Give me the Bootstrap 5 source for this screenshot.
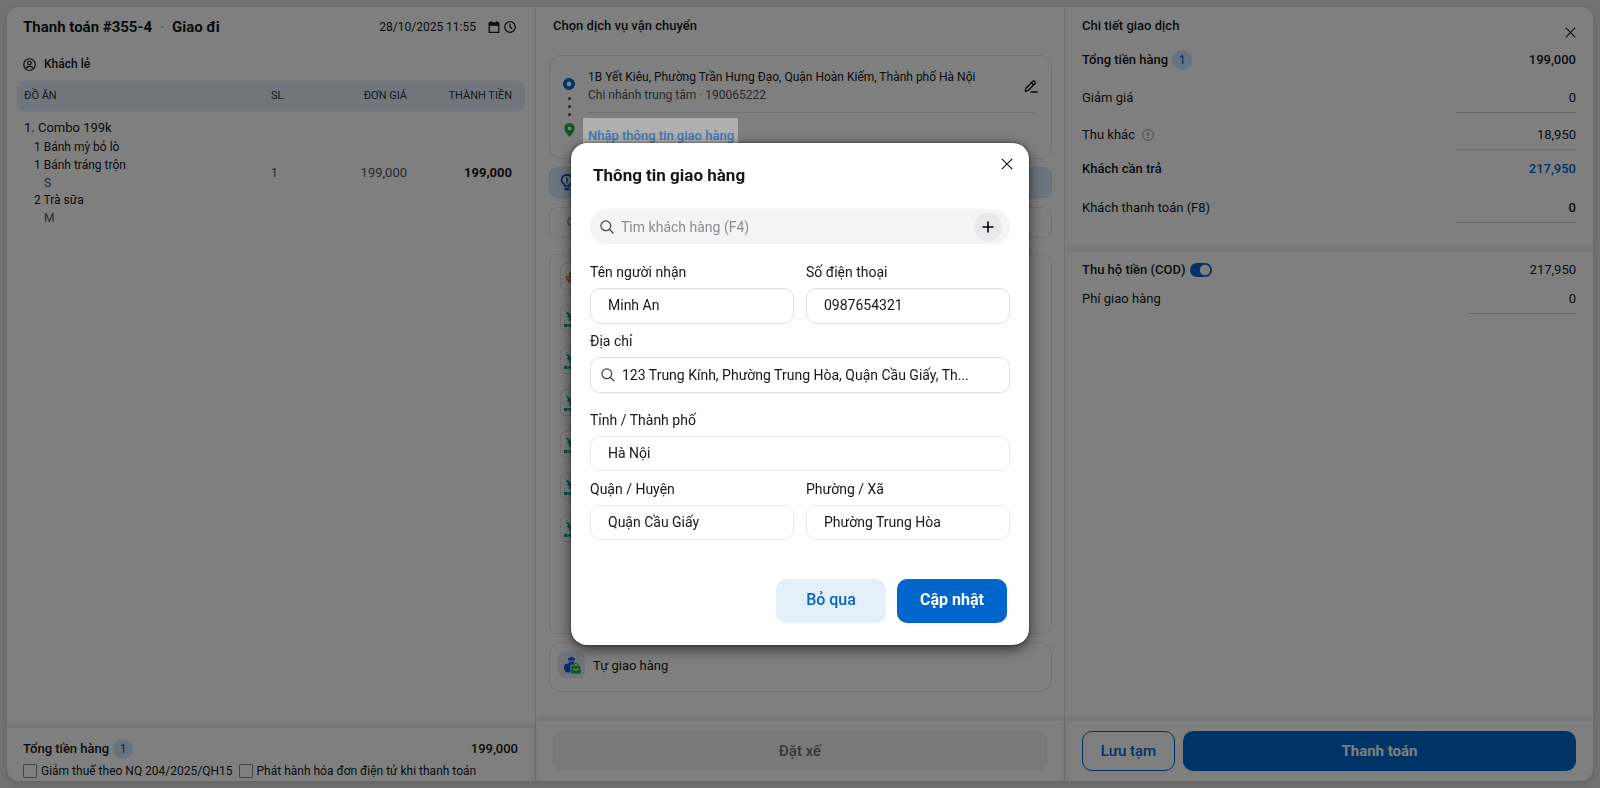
<!DOCTYPE html>
<html lang="vi">
<head>
<meta charset="utf-8">
<meta name="viewport" content="width=device-width, initial-scale=1">
<title>Thanh toán - Giao đi</title>
<link rel="stylesheet" href="https://cdn.jsdelivr.net/npm/bootstrap@5.3.0/dist/css/bootstrap.min.css">
<style>
  :root { --pos-blue: #0066cc; --line: #e2e3e5; --soft: #e0edf9; --ink: #15171a; }
  body { font-family: Roboto, "Noto Sans", sans-serif; font-size: 13px; line-height: 18px; color: var(--ink); background: #e4e4e4; }
  .page { min-height: 100vh; padding: 7px; }
  .panel { background: #fff; border-radius: 12px; overflow: hidden; box-shadow: 0 2px 6px rgba(0,0,0,.14); }
  .pane { flex: 1 1 0; min-width: 0; display: flex; flex-direction: column; }
  .pane + .pane { border-left: 1px solid #e0e0e0; }
  .pane-foot { margin-top: auto; border-top: 1px solid #efefef; box-shadow: 0 -2px 4px rgba(0,0,0,.04), 0 0 8px rgba(0,0,0,.12); }
  .edge { padding-left: 17px; padding-right: 17px; }
  .head { padding-top: 10px; }
  .fine { font-size: 12px; }
  .heavy { font-weight: 500; }
  .bolder { font-weight: 700; }
  .muted { color: #505357; }
  .blue { color: var(--pos-blue); }
  h1, h2, h3 { font-size: 13px; line-height: 18px; font-weight: 500; margin: 0; }
  .doc-head { padding: 10px 19px 0 16px; }
  .pane .doc-title { font-size: 15px; line-height: 20px; font-weight: 700; }
  .icon-btn { border: 0; background: none; padding: 0; display: inline-flex; color: inherit; }
  .count { width: 20px; height: 20px; border-radius: 50%; background: #cfe6fc; color: #0057b8; font-weight: 400; display: inline-flex; align-items: center; justify-content: center; }

  /* order table */
  .client { margin: 18px 0 8px; padding: 0 16px; }
  .order-wrap { padding: 0 10px; }
  .order { width: 100%; border-collapse: separate; border-spacing: 0; }
  .order th { background: var(--soft); font-weight: 400; font-size: 11px; height: 30px; padding: 0 13px 0 0; color: #333; }
  .order th:first-child, .order td:first-child { padding-left: 7px; }
  .order th:first-child { border-radius: 6px 0 0 6px; }
  .order th:last-child { border-radius: 0 6px 6px 0; }
  .order td { padding: 8px 13px 0 0; vertical-align: middle; }
  .combo { font-size: 12px; padding-top: 1px; }
  .combo li { padding-left: 10px; }
  .combo .opt { padding-left: 20px; margin-top: 1px; color: #505357; line-height: 16px; }
  .sum { padding: 11px 17px 1px 16px; }
  .tick { width: 14px; height: 14px; margin: 0; border: 1px solid #8a8a8a; flex: none; }
  .tick[type=checkbox] { border-radius: 1px; }
  .ticks { margin-top: 3px; gap: 6px; }

  /* delivery */
  .stack { padding: 0 12px 0 13px; }
  .box { border: 1px solid var(--line); border-radius: 12px; }
  .route { margin-top: 20px; min-height: 104px; padding: 0 13px; gap: 13px; }
  .route-marks { padding-top: 22px; width: 12px; }
  .route-marks i { width: 3px; height: 3px; border-radius: 50%; background: #555; }
  .route-dots { gap: 5px; margin: 7px 0; }
  .stop { padding: 12px 0 8px; border-bottom: 1px solid #e4e5e7; }
  .place-link { position: relative; z-index: 1051; background: #afafaf; color: #3a78b8; font-weight: 500; text-decoration: none; padding: 9px 4px 7px 5px; display: inline-block; margin: 5px 0 0 -5px; }
  .tip { background: #dcebf9; border: 1px solid #c3dff8; border-radius: 8px; height: 31px; padding-left: 10px; margin-top: 8px; }
  .find { height: 31px; border-radius: 8px; margin-top: 9px; padding-left: 17px; }
  .find input, .seek input, .addr input { border: 0; background: none; outline: 0; min-width: 0; padding: 0 0 0 7px; }
  .carriers { border-radius: 8px; height: 380px; margin-top: 16px; padding: 8px 10px; gap: 15px; }
  .carrier { width: 27px; height: 27px; border: 1px solid var(--line); border-radius: 6px; display: flex; align-items: center; justify-content: center; flex: none; }
  .self-ship { height: 50px; margin-top: 8px; padding: 8px; gap: 8px; }
  .self-ship .carrier { background: #dfeaf5; border: 0; }
  .self-ship label, .self-ship .name { padding-top: 6px; }
  .acts { padding-top: 10px; padding-bottom: 10px; gap: 8px; }
  .act { height: 40px; border-radius: 10px; font-size: 15px; font-weight: 500; line-height: 20px; padding: 0; }
  .act-off:disabled { background: #f3f3f3; border: 0; color: #6d6f72; opacity: 1; }
  .act-line { width: 93px; border: 1px solid var(--pos-blue); color: var(--pos-blue); }
  .act-main { background: var(--pos-blue); color: #fff; font-weight: 700; }

  /* transaction */
  .close-pane { padding-top: 10px; }
  .row-line { display: flex; align-items: baseline; justify-content: space-between; }
  .gap-xs { margin-top: 10px; }
  .gap-s { margin-top: 12px; }
  .gap-l { margin-top: 18px; }
  .gap-xl { margin-top: 20px; }
  .money { border: 0; border-bottom: 1px solid #d0d0d0; border-radius: 0; background: none; width: 120px; padding: 0 0 6px; text-align: right; line-height: 18px; height: 25px; color: inherit; outline: 0; }
  .money-s { width: 108px; }
  .band { height: 7px; background: #f0f0f0; margin: 22px 0 9px; }
  .form-check-input.toggle { width: 22px; height: 14px; margin: 0; border: 0; min-height: 0; flex: none; }
  .form-check-input.toggle:checked { background-color: var(--pos-blue); }

  /* dialog */
  .ship-dialog { max-width: 458px; }
  .ship { border: 0; border-radius: 16px; padding: 20px 19px 22px; box-shadow: 0 4px 14px rgba(0,0,0,.6), 0 0 3px rgba(0,0,0,.5); font-size: 14px; line-height: 20px; }
  .ship h2 { font-size: 17px; line-height: 24px; font-weight: 700; padding-left: 3px; }
  .ship-x { position: absolute; top: 15px; right: 16px; }
  .seek { height: 35px; border-radius: 18px; background: #f4f4f5; padding: 0 8px 0 10px; margin: 22px 0 18px; }
  .seek input::placeholder { color: #8a8d91; opacity: 1; }
  .seek > svg, .addr > svg { color: #3f454d; flex: none; }
  .icon-btn.add { width: 28px; height: 28px; border-radius: 50%; background: #e9e9eb; color: #000; align-items: center; justify-content: center; flex: none; }
  .ship label { display: block; height: 26px; }
  .field, .addr { height: 36px; border: 1px solid #dfe0e2; border-radius: 10px; color: var(--ink); }
  .field { padding: 0 17px 2px; font-size: 14px; }
  .field-low { height: 35px; border-color: #e9e9ea; }
  .addr { padding: 0 34px 1px 10px; margin-bottom: 17px; }
  .addr input { text-overflow: ellipsis; color: var(--ink); }
  .pair { gap: 12px; margin-bottom: 7px; }
  .pair > div { flex: 1 1 0; min-width: 0; }
  .ship-acts { margin-top: 32px; gap: 11px; padding-right: 3px; }
  .ship-btn { width: 110px; height: 44px; border: 0; border-radius: 10px; font-size: 16px; font-weight: 500; padding: 0 0 2px; }
  .skip { background: #e5effa; color: var(--pos-blue); }
  .save { background: var(--pos-blue); color: #fff; font-weight: 700; }
</style>
</head>
<body>
<svg class="d-none" aria-hidden="true">
  <symbol id="glass" viewBox="0 0 14 14"><circle cx="5.8" cy="5.8" r="4.9" fill="none" stroke="currentColor" stroke-width="1.2"/><path d="M9.3 9.3 13.4 13.4" stroke="currentColor" stroke-width="1.3"/></symbol>
  <symbol id="cross" viewBox="0 0 12 12"><path d="M.8.8 11.2 11.2M11.2.8.8 11.2" stroke="currentColor" stroke-width="1.2"/></symbol>
  <symbol id="teal" viewBox="0 0 20 20"><path d="M1.500 2.500C4 3 5.500 4 6.500 6l5-3-.5 4 3-1-3 4-3 2-3.500-.5 1.500-2-3.500-2 2-.8z" fill="#00a08c"/><path d="M7 9h3l-2 2.500z" fill="#d9a22a"/><path d="M0 15h3.500v3H0zM4.500 15H8v3H4.500zM9 15h3.500v3H9zM13.500 15H17v3h-3.500z" fill="#00a08c"/></symbol>
</svg>

<div class="page d-flex">
<main class="panel d-flex flex-grow-1">

  <section class="pane">
    <header class="doc-head d-flex align-items-center">
      <h1 class="doc-title">Thanh toán #355-4 <span class="text-secondary opacity-50 mx-1">·</span> Giao đi</h1>
      <span class="fine ms-auto me-2 pe-1">28/10/2025 11:55</span>
      <button type="button" class="icon-btn me-1" aria-label="Chọn ngày"><svg width="12" height="12" viewBox="0 0 12 12"><path d="M1.2 2h9.6v9.3H1.2z" fill="none" stroke="currentColor" stroke-width="1.3" stroke-linejoin="round"/><path d="M1 2h10v2.800H1zM2.500.3H4V3H2.500zM8 .3h1.500V3H8z" fill="currentColor"/></svg></button>
      <button type="button" class="icon-btn" aria-label="Chọn giờ"><svg width="12" height="12" viewBox="0 0 12 12" fill="none" stroke="currentColor" stroke-width="1.2"><circle cx="6" cy="6" r="5.300"/><path d="M6 2.800V6l2 1.800"/></svg></button>
    </header>
    <div class="client d-flex align-items-center">
      <svg class="me-2" width="13" height="13" viewBox="0 0 14 14" fill="none" stroke="currentColor" stroke-width="1.3"><circle cx="7" cy="7" r="6.200"/><circle cx="7" cy="5.500" r="2"/><path d="M3 11c1.500-2.600 6.500-2.600 8 0"/></svg>
      <span class="fine heavy">Khách lẻ</span>
    </div>
    <div class="order-wrap">
      <table class="order">
        <colgroup><col><col style="width:52px"><col style="width:97px"><col style="width:105px"></colgroup>
        <thead><tr><th>ĐỒ ĂN</th><th>SL</th><th class="text-end">ĐƠN GIÁ</th><th class="text-end">THÀNH TIỀN</th></tr></thead>
        <tbody><tr>
          <td>1. Combo 199k
            <ul class="combo list-unstyled mb-0">
              <li>1 Bánh mỳ bỏ lò</li><li>1 Bánh tráng trộn</li><li class="opt">S</li><li>2 Trà sữa</li><li class="opt">M</li>
            </ul></td>
          <td class="fine muted">1</td><td class="text-end muted">199,000</td><td class="text-end bolder">199,000</td>
        </tr></tbody>
      </table>
    </div>
    <footer class="pane-foot sum">
      <div class="d-flex align-items-center"><span class="heavy me-1">Tổng tiền hàng</span><span class="count fine">1</span><span class="ms-auto heavy">199,000</span></div>
      <div class="ticks d-flex fine">
        <label class="d-flex align-items-center gap-1"><input type="checkbox" class="form-check-input tick">Giảm thuế theo NQ 204/2025/QH15</label>
        <label class="d-flex align-items-center gap-1"><input type="checkbox" class="form-check-input tick">Phát hành hóa đơn điện tử khi thanh toán</label>
      </div>
    </footer>
  </section>

  <section class="pane">
    <h2 class="edge head">Chọn dịch vụ vận chuyển</h2>
    <div class="stack">
      <div class="box route d-flex">
        <div class="route-marks d-flex flex-column align-items-center">
          <svg width="12" height="12" viewBox="0 0 12 12"><circle cx="6" cy="6" r="4.200" fill="none" stroke="#0066cc" stroke-width="3.600"/></svg>
          <div class="route-dots d-flex flex-column"><i></i><i></i><i></i></div>
          <svg width="11" height="14" viewBox="0 0 11 14"><path fill-rule="evenodd" d="M5.500 0A5.200 5.200 0 0 0 .3 5.200C.3 9 5.500 14 5.500 14s5.200-5 5.200-8.800A5.200 5.200 0 0 0 5.500 0zm0 3.400a1.900 1.900 0 1 1 0 3.800 1.900 1.900 0 0 1 0-3.800z" fill="#1faa4a"/></svg>
        </div>
        <div class="flex-grow-1">
          <div class="stop fine d-flex align-items-center">
            <div class="flex-grow-1">
              <div>1B Yết Kiêu, Phường Trần Hưng Đạo, Quận Hoàn Kiếm, Thành phố Hà Nội</div>
              <div class="muted">Chi nhánh trung tâm · 190065222</div>
            </div>
            <button type="button" class="icon-btn" aria-label="Sửa địa chỉ"><svg width="14" height="13" viewBox="0 0 14 13" fill="none" stroke="currentColor" stroke-width="1.300" stroke-linejoin="round"><path d="M1.200 11.500 2 8.300 8.800 1.300c1.300-1 3.200.7 2.200 2.200L4.300 10.300zM7.500 2.800l2 2M6.500 12h7.200"/></svg></button>
          </div>
          <a href="#" class="place-link">Nhập thông tin giao hàng</a>
        </div>
      </div>
      <div class="tip d-flex align-items-center">
        <svg width="14" height="17" viewBox="0 0 14 17" fill="none" stroke="#0b4fc0" stroke-width="1.600"><path d="M4.500 12v-1.500C-1 7 2 .9 7 .9s8 6.100 2.500 9.600V12z"/><path d="M7 3.500v4M7 8.200v1.300"/><path d="M4.500 15h5" stroke-width="2.400"/></svg>
      </div>
      <div class="box find d-flex align-items-center"><svg class="muted" width="11" height="11"><use href="#glass"/></svg><input type="text" class="flex-grow-1" aria-label="Tìm dịch vụ"></div>
      <div class="box carriers d-flex flex-column">
        <span class="carrier"><svg width="20" height="16" viewBox="0 0 20 16" fill="#f26b21"><path d="M5 3.500h7v3h5l-1 2H1v-1.500h4zM2 9.500h14l1 4H4v-2H2z"/></svg></span>
        <span class="carrier"><svg width="20" height="20"><use href="#teal"/></svg></span>
        <span class="carrier"><svg width="20" height="20"><use href="#teal"/></svg></span>
        <span class="carrier"><svg width="20" height="20"><use href="#teal"/></svg></span>
        <span class="carrier"><svg width="20" height="20"><use href="#teal"/></svg></span>
        <span class="carrier"><svg width="20" height="20"><use href="#teal"/></svg></span>
        <span class="carrier"><svg width="20" height="20"><use href="#teal"/></svg></span>
      </div>
      <div class="box self-ship d-flex">
        <span class="carrier"><svg width="18" height="18" viewBox="0 0 18 18"><path d="M5 2.500 8.500.8 12 2.500v2H5zM5.700 5.500h5.600C11 8.300 9.700 9 8.500 9S6 8.300 5.700 5.500z" fill="#0b5cd0"/><path d="M1 10c1-2 3-3 5.500-2.500L7.500 9v7.500h-4C1.500 15.500.5 12.500 1 10z" fill="#0b5cd0"/><path d="M8.600 10h8.600l.6 7.500H8z" fill="#1fae3f"/><path d="M10.600 10.500c0-4 4.600-4 4.600 0" fill="none" stroke="#1fae3f" stroke-width="1.200"/><path d="M10.600 12.500c.6 2.200 4 2.200 4.600 0" fill="none" stroke="#fff" stroke-width="1.200"/></svg></span>
        <span class="name">Tự giao hàng</span>
      </div>
    </div>
    <footer class="pane-foot acts edge d-flex"><button type="button" class="btn act act-off w-100" disabled>Đặt xế</button></footer>
  </section>

  <section class="pane">
    <header class="edge head d-flex justify-content-between">
      <h2>Chi tiết giao dịch</h2>
      <button type="button" class="icon-btn close-pane" aria-label="Đóng"><svg width="11" height="11"><use href="#cross"/></svg></button>
    </header>
    <div class="edge">
      <div class="d-flex align-items-center gap-s heavy"><span class="me-1">Tổng tiền hàng</span><span class="count">1</span><span class="ms-auto">199,000</span></div>
      <div class="row-line gap-l"><label for="m1">Giảm giá</label><input id="m1" class="money" value="0"></div>
      <div class="row-line gap-s"><label for="m2">Thu khác <svg class="ms-1 text-secondary opacity-75" width="12" height="12" viewBox="0 0 12 12" fill="none" stroke="currentColor"><circle cx="6" cy="6" r="5.400"/><path d="M6 3v4M6 8v1.200" stroke-width="1.200"/></svg></label><input id="m2" class="money" value="18,950"></div>
      <div class="row-line gap-xs heavy"><span>Khách cần trả</span><span class="blue">217,950</span></div>
      <div class="row-line gap-xl"><label for="m3">Khách thanh toán (F8)</label><input id="m3" class="money heavy" value="0"></div>
    </div>
    <div class="band"></div>
    <div class="edge">
      <div class="d-flex align-items-center"><label class="heavy me-1" for="cod">Thu hộ tiền (COD)</label><span class="form-switch p-0 m-0 d-flex"><input id="cod" type="checkbox" role="switch" class="form-check-input toggle" checked></span><span class="ms-auto">217,950</span></div>
      <div class="row-line gap-xs"><label for="m4">Phí giao hàng</label><input id="m4" class="money money-s" value="0"></div>
    </div>
    <footer class="pane-foot acts edge d-flex">
      <button type="button" class="btn act act-line flex-shrink-0">Lưu tạm</button>
      <button type="button" class="btn act act-main flex-grow-1">Thanh toán</button>
    </footer>
  </section>
</main>
</div>

<div class="modal-backdrop show"></div>
<div class="modal d-block" tabindex="-1" role="dialog" aria-labelledby="ship-title">
  <div class="modal-dialog modal-dialog-centered ship-dialog">
    <form class="modal-content ship">
      <button type="button" class="icon-btn ship-x" aria-label="Đóng"><svg width="12" height="12"><use href="#cross"/></svg></button>
      <h2 id="ship-title">Thông tin giao hàng</h2>
      <div class="seek d-flex align-items-center">
        <svg width="14" height="14"><use href="#glass"/></svg>
        <input type="text" class="flex-grow-1" placeholder="Tìm khách hàng (F4)" aria-label="Tìm khách hàng">
        <button type="button" class="icon-btn add" aria-label="Thêm khách hàng"><svg width="12" height="12" viewBox="0 0 12 12"><path d="M6 .5v11M.5 6h11" stroke="currentColor" stroke-width="1.600"/></svg></button>
      </div>
      <div class="pair d-flex">
        <div><label for="f1">Tên người nhận</label><input id="f1" class="form-control field" value="Minh An"></div>
        <div><label for="f2">Số điện thoại</label><input id="f2" class="form-control field" value="0987654321"></div>
      </div>
      <label for="f3">Địa chỉ</label>
      <div class="addr d-flex align-items-center">
        <svg width="14" height="14"><use href="#glass"/></svg>
        <input id="f3" type="text" class="flex-grow-1" value="123 Trung Kính, Phường Trung Hòa, Quận Cầu Giấy, Th...">
      </div>
      <label for="f4">Tỉnh / Thành phố</label>
      <input id="f4" class="form-control field field-low mb-2" value="Hà Nội">
      <div class="pair d-flex">
        <div><label for="f5">Quận / Huyện</label><input id="f5" class="form-control field field-low" value="Quận Cầu Giấy"></div>
        <div><label for="f6">Phường / Xã</label><input id="f6" class="form-control field field-low" value="Phường Trung Hòa"></div>
      </div>
      <div class="ship-acts d-flex justify-content-end">
        <button type="button" class="btn ship-btn skip">Bỏ qua</button>
        <button type="submit" class="btn ship-btn save">Cập nhật</button>
      </div>
    </form>
  </div>
</div>
<script src="https://cdn.jsdelivr.net/npm/bootstrap@5.3.0/dist/js/bootstrap.bundle.min.js"></script>
</body>
</html>
